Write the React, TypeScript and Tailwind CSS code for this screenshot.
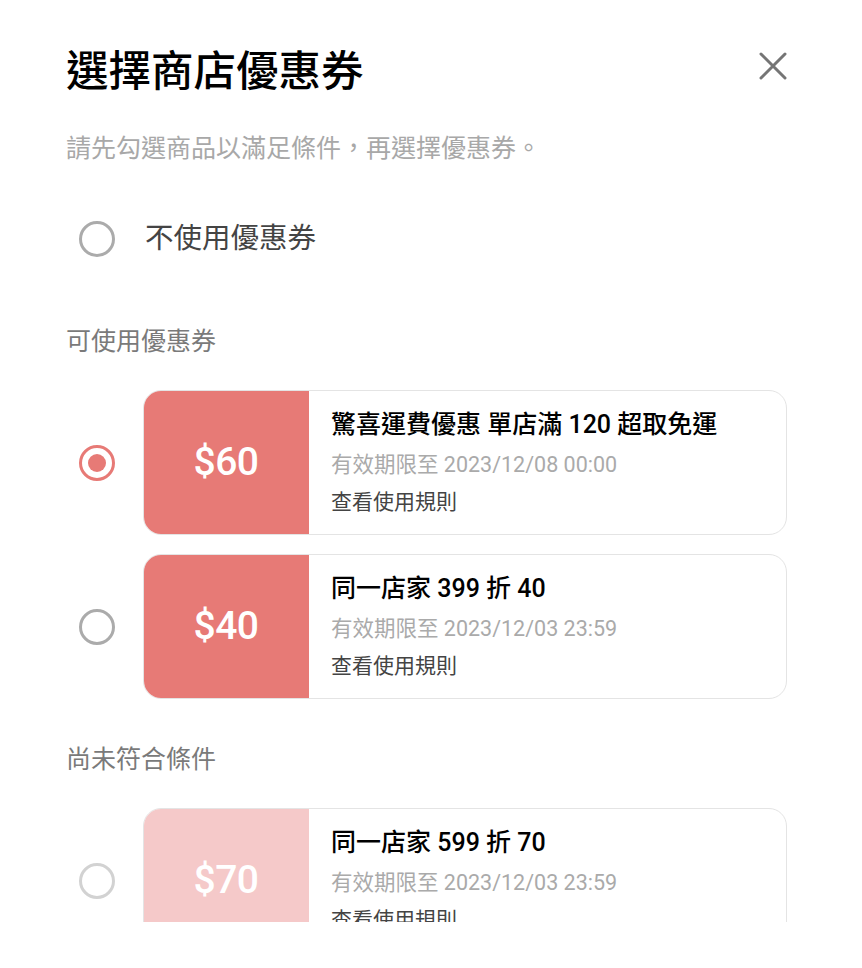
import React from "react";

const RED = "bg-[#e77a76]";

function Radio({ state }: { state: "on" | "off" | "disabled" }) {
  if (state === "on") {
    return (
      <div className="w-[36px] h-[36px] shrink-0 rounded-full border-[3px] border-[#e77a76] flex items-center justify-center">
        <div className="w-[18px] h-[18px] rounded-full bg-[#e77a76]" />
      </div>
    );
  }
  return (
    <div
      className={
        "w-[36px] h-[36px] shrink-0 rounded-full border-[3px] " +
        (state === "off" ? "border-[#ababab]" : "border-[#d2d2d2]")
      }
    />
  );
}

function Coupon({
  amount,
  title,
  date,
  state,
  faded,
  mt,
}: {
  amount: string;
  title: string;
  date: string;
  state: "on" | "off" | "disabled";
  faded?: boolean;
  mt: string;
}) {
  return (
    <div className={"flex items-center gap-[28px] pl-[79px] pr-[75px] " + mt}>
      <Radio state={state} />
      <div className="flex-1 h-[145px] flex rounded-[18px] border border-[#e4e4e4] overflow-hidden bg-white">
        <div
          className={
            "w-[166px] shrink-0 flex items-center justify-center -my-px -ml-px " +
            (faded ? "bg-[#f5c9c9]" : RED)
          }
        >
          <span className="text-white text-[39px] font-medium tracking-[-0.5px]">{amount}</span>
        </div>
        <div className="flex-1 pl-[22px] pt-[17px]">
          <div className="text-[25px] leading-[34px] font-medium text-black">{title}</div>
          <div className="mt-[8px] text-[21.5px] leading-[30px] text-[#aaaaaa]">{date}</div>
          <div className="mt-[7px] text-[21px] leading-[30px] text-[#444444]">查看使用規則</div>
        </div>
      </div>
    </div>
  );
}

export default function App() {
  return (
    <div
      className="w-[862px] h-[968px] bg-white"
      style={{ fontFamily: 'Roboto, "Noto Sans CJK TC", "Noto Sans", sans-serif' }}
    >
      <div className="h-[922px] overflow-hidden">
        <div className="flex items-center justify-between pl-[66px] pr-[75px] pt-[46px]">
          <h1 className="text-[42.5px] leading-[52px] font-medium text-black">選擇商店優惠券</h1>
          <svg width="28" height="28" viewBox="0 0 28 28" className="-mt-[12px]">
            <path d="M2 2 L26 26 M26 2 L2 26" stroke="#757575" strokeWidth="3" strokeLinecap="round" />
          </svg>
        </div>
        <p className="mt-[34px] pl-[66px] text-[25px] leading-[34px] text-[#a8a8a8]">
          請先勾選商品以滿足條件，再選擇優惠券。
        </p>
        <div className="mt-[55px] flex items-center gap-[30px] pl-[79px]">
          <Radio state="off" />
          <span className="text-[28.5px] leading-[36px] text-[#444444]">不使用優惠券</span>
        </div>
        <div className="mt-[68px] pl-[66px] text-[25px] leading-[34px] text-[#7a7a7a]">可使用優惠券</div>
        <Coupon
          mt="mt-[31px]"
          amount="$60"
          title="驚喜運費優惠 單店滿 120 超取免運"
          date="有效期限至 2023/12/08 00:00"
          state="on"
        />
        <Coupon
          mt="mt-[19px]"
          amount="$40"
          title="同一店家 399 折 40"
          date="有效期限至 2023/12/03 23:59"
          state="off"
        />
        <div className="mt-[44px] pl-[66px] text-[25px] leading-[34px] text-[#7a7a7a]">尚未符合條件</div>
        <Coupon
          mt="mt-[31px]"
          amount="$70"
          title="同一店家 599 折 70"
          date="有效期限至 2023/12/03 23:59"
          state="disabled"
          faded
        />
      </div>
    </div>
  );
}
